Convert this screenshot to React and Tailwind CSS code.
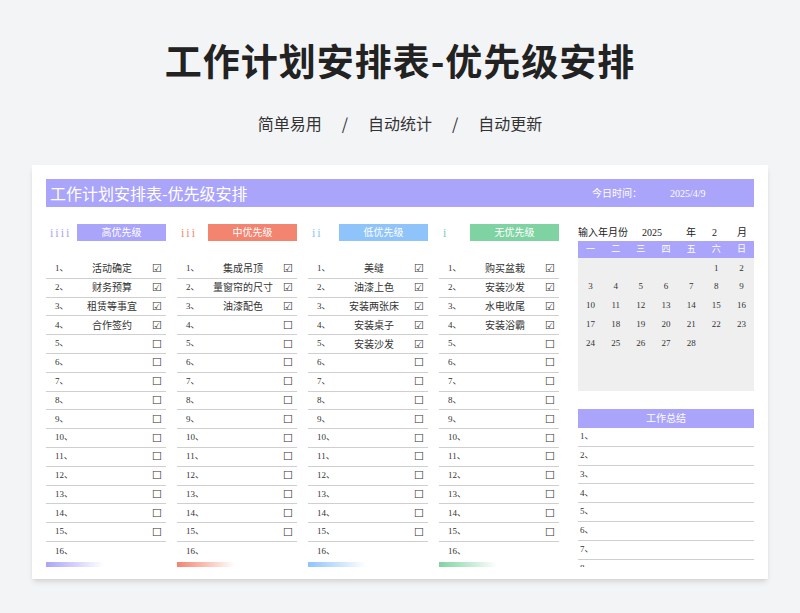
const cols = [
  { mark: 'iiii', markColor: 'text-[#a9a3fb]', label: '高优先级', bg: 'bg-[#aaa4fb]', bar: 'from-[#aaa4fb]', pct: '25%', items: ['活动确定', '财务预算', '租赁等事宜', '合作签约'] },
  { mark: 'iii', markColor: 'text-[#f08a72]', label: '中优先级', bg: 'bg-[#f38470]', bar: 'from-[#f38470]', pct: '19%', items: ['集成吊顶', '量窗帘的尺寸', '油漆配色'] },
  { mark: 'ii', markColor: 'text-[#8cc4f4]', label: '低优先级', bg: 'bg-[#8fc4fa]', bar: 'from-[#8fc4fa]', pct: '31%', items: ['美缝', '油漆上色', '安装两张床', '安装桌子', '安装沙发'] },
  { mark: 'i', markColor: 'text-[#78d0a0]', label: '无优先级', bg: 'bg-[#7fd3a2]', bar: 'from-[#7fd3a2]', pct: '25%', items: ['购买盆栽', '安装沙发', '水电收尾', '安装浴霸'] },
];

const days = ['一', '二', '三', '四', '五', '六', '日'];
const cal = [
  ['', '', '', '', '', 1, 2],
  [3, 4, 5, 6, 7, 8, 9],
  [10, 11, 12, 13, 14, 15, 16],
  [17, 18, 19, 20, 21, 22, 23],
  [24, 25, 26, 27, 28, '', ''],
];

function Column({ c }) {
  const rows = Array.from({ length: 16 }, (_, i) => i);
  return (
    <div className="w-[120px] flex flex-col">
      <div className="flex items-center h-[17px] mb-[19px]">
        <span className={`w-[31px] pl-[4px] text-[12px] tracking-[2px] ${c.markColor}`}>{c.mark}</span>
        <div className={`flex-1 h-[17px] ${c.bg} text-white text-[10px] flex items-center justify-center`}>{c.label}</div>
      </div>
      {rows.map((i) => (
        <div key={i} className={`h-[18.8px] flex items-center text-[10px] text-[#333] ${i < 15 ? 'border-b border-[#cfcfcf]' : ''}`}>
          <span className="w-[30px] pl-[9px] text-[9px]">{i + 1}、</span>
          <span className="flex-1 text-center">{c.items[i] || ''}</span>
          {i < 15 && <span className="w-[18px] text-[11px] leading-none text-center">{c.items[i] ? '☑' : '☐'}</span>}
        </div>
      ))}
      <div className="flex items-start h-[12px] pt-[1px]">
        <div className={`w-[58px] h-[8px] bg-gradient-to-r ${c.bar} to-white/0`} />
        <span className="text-[8px] leading-none mt-[6px]">{c.pct}</span>
      </div>
    </div>
  );
}

export default function App() {
  return (
    <div className="w-[800px] h-[613px] bg-[#f3f4f6] flex flex-col items-center" style={{ fontFamily: '"Liberation Serif", "Noto Sans CJK SC", serif' }}>
      <h1 className="mt-[36px] text-[37px] font-bold text-[#222] leading-[48px] tracking-[1px]" style={{ fontFamily: '"Noto Sans CJK SC", sans-serif' }}>工作计划安排表-优先级安排</h1>
      <div className="mt-[27px] text-[16px] text-[#333] flex gap-[20px]" style={{ fontFamily: '"Noto Sans CJK SC", sans-serif' }}>
        <span>简单易用</span><span>/</span><span>自动统计</span><span>/</span><span>自动更新</span>
      </div>
      <div className="mt-[30px] w-[736px] h-[414px] bg-white shadow-md px-[14px] pt-[14px] pb-[12px]">
        <div className="h-full overflow-hidden">
          <div className="h-[28px] bg-[#aaa4fb] flex items-center text-white">
            <span className="pl-[4px] text-[16px]" style={{ fontFamily: '"Noto Sans CJK SC", sans-serif' }}>工作计划安排表-优先级安排</span>
            <span className="ml-auto text-[10px] w-[78px]">今日时间：</span>
            <span className="text-[10px] w-[84px]">2025/4/9</span>
          </div>
          <div className="flex mt-[17px]">
            <div className="flex gap-[11px]">
              {cols.map((c) => <Column key={c.label} c={c} />)}
            </div>
            <div className="ml-[19px] w-[177px] flex flex-col">
              <div className="h-[17px] flex items-center text-[10px] text-[#222]">
                <span className="w-[64px]">输入年月份</span>
                <span className="w-[44px]">2025</span>
                <span className="w-[26px]">年</span>
                <span className="w-[25px]">2</span>
                <span>月</span>
              </div>
              <div className="h-[17px] bg-[#aaa4fb] grid grid-cols-7 text-white text-[9px] items-center text-center">
                {days.map((d) => <span key={d}>{d}</span>)}
              </div>
              <div className="h-[133px] bg-[#efefef] pt-[1px]">
                {cal.map((r, i) => (
                  <div key={i} className="h-[18.8px] grid grid-cols-7 items-center text-center text-[9px] text-[#333]">
                    {r.map((d, j) => <span key={j}>{d}</span>)}
                  </div>
                ))}
              </div>
              <div className="mt-[18px] h-[19px] bg-[#aaa4fb] text-white text-[10px] flex items-center justify-center">工作总结</div>
              {Array.from({ length: 8 }, (_, i) => (
                <div key={i} className="h-[18.8px] border-b border-[#cfcfcf] flex items-center text-[9px] text-[#333] pl-[2px]">{i + 1}、</div>
              ))}
            </div>
          </div>
        </div>
      </div>
    </div>
  );
}
